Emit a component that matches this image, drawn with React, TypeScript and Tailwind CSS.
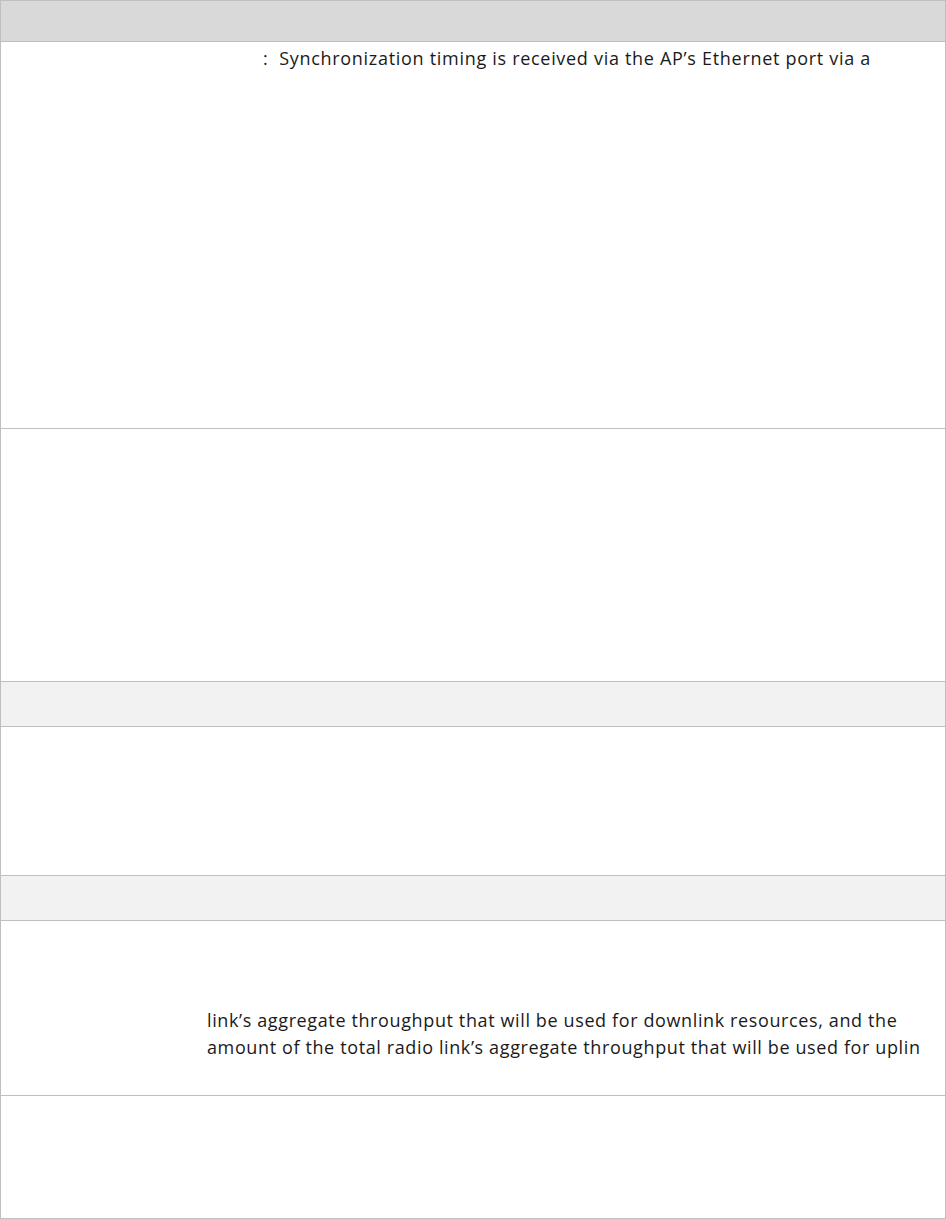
export default function App() {
  const font = { fontFamily: '"Open Sans", "Liberation Sans", sans-serif' };
  return (
    <div className="w-[946px] h-[1219px] bg-white text-[#1a1a1a]" style={font}>
      <div className="border border-[#bfbfbf] border-b-0">
        <div className="h-[41px] bg-[#d9d9d9] border-b border-[#bfbfbf]" />
        <div className="h-[387px] border-b border-[#bfbfbf] pl-[262px] pt-[4px]">
          <p className="text-[18px] leading-[24px] tracking-[0.7px] whitespace-nowrap">:&nbsp; Synchronization timing is received via the AP’s Ethernet port via a</p>
        </div>
        <div className="h-[253px] border-b border-[#bfbfbf]" />
        <div className="h-[45px] bg-[#f2f2f2] border-b border-[#bfbfbf]" />
        <div className="h-[149px] border-b border-[#bfbfbf]" />
        <div className="h-[45px] bg-[#f2f2f2] border-b border-[#bfbfbf]" />
        <div className="h-[175px] border-b border-[#bfbfbf] pl-[206px] pt-[86px]">
          <div className="w-[720px]">
            <p className="text-[18px] leading-[27px] tracking-[0.62px] whitespace-nowrap">link’s aggregate throughput that will be used for downlink resources, and the</p>
            <p className="text-[18px] leading-[27px] tracking-[0.62px] whitespace-nowrap">amount of the total radio link’s aggregate throughput that will be used for uplin</p>
          </div>
        </div>
        <div className="h-[123px] border-b border-[#bfbfbf]" />
      </div>
    </div>
  );
}
